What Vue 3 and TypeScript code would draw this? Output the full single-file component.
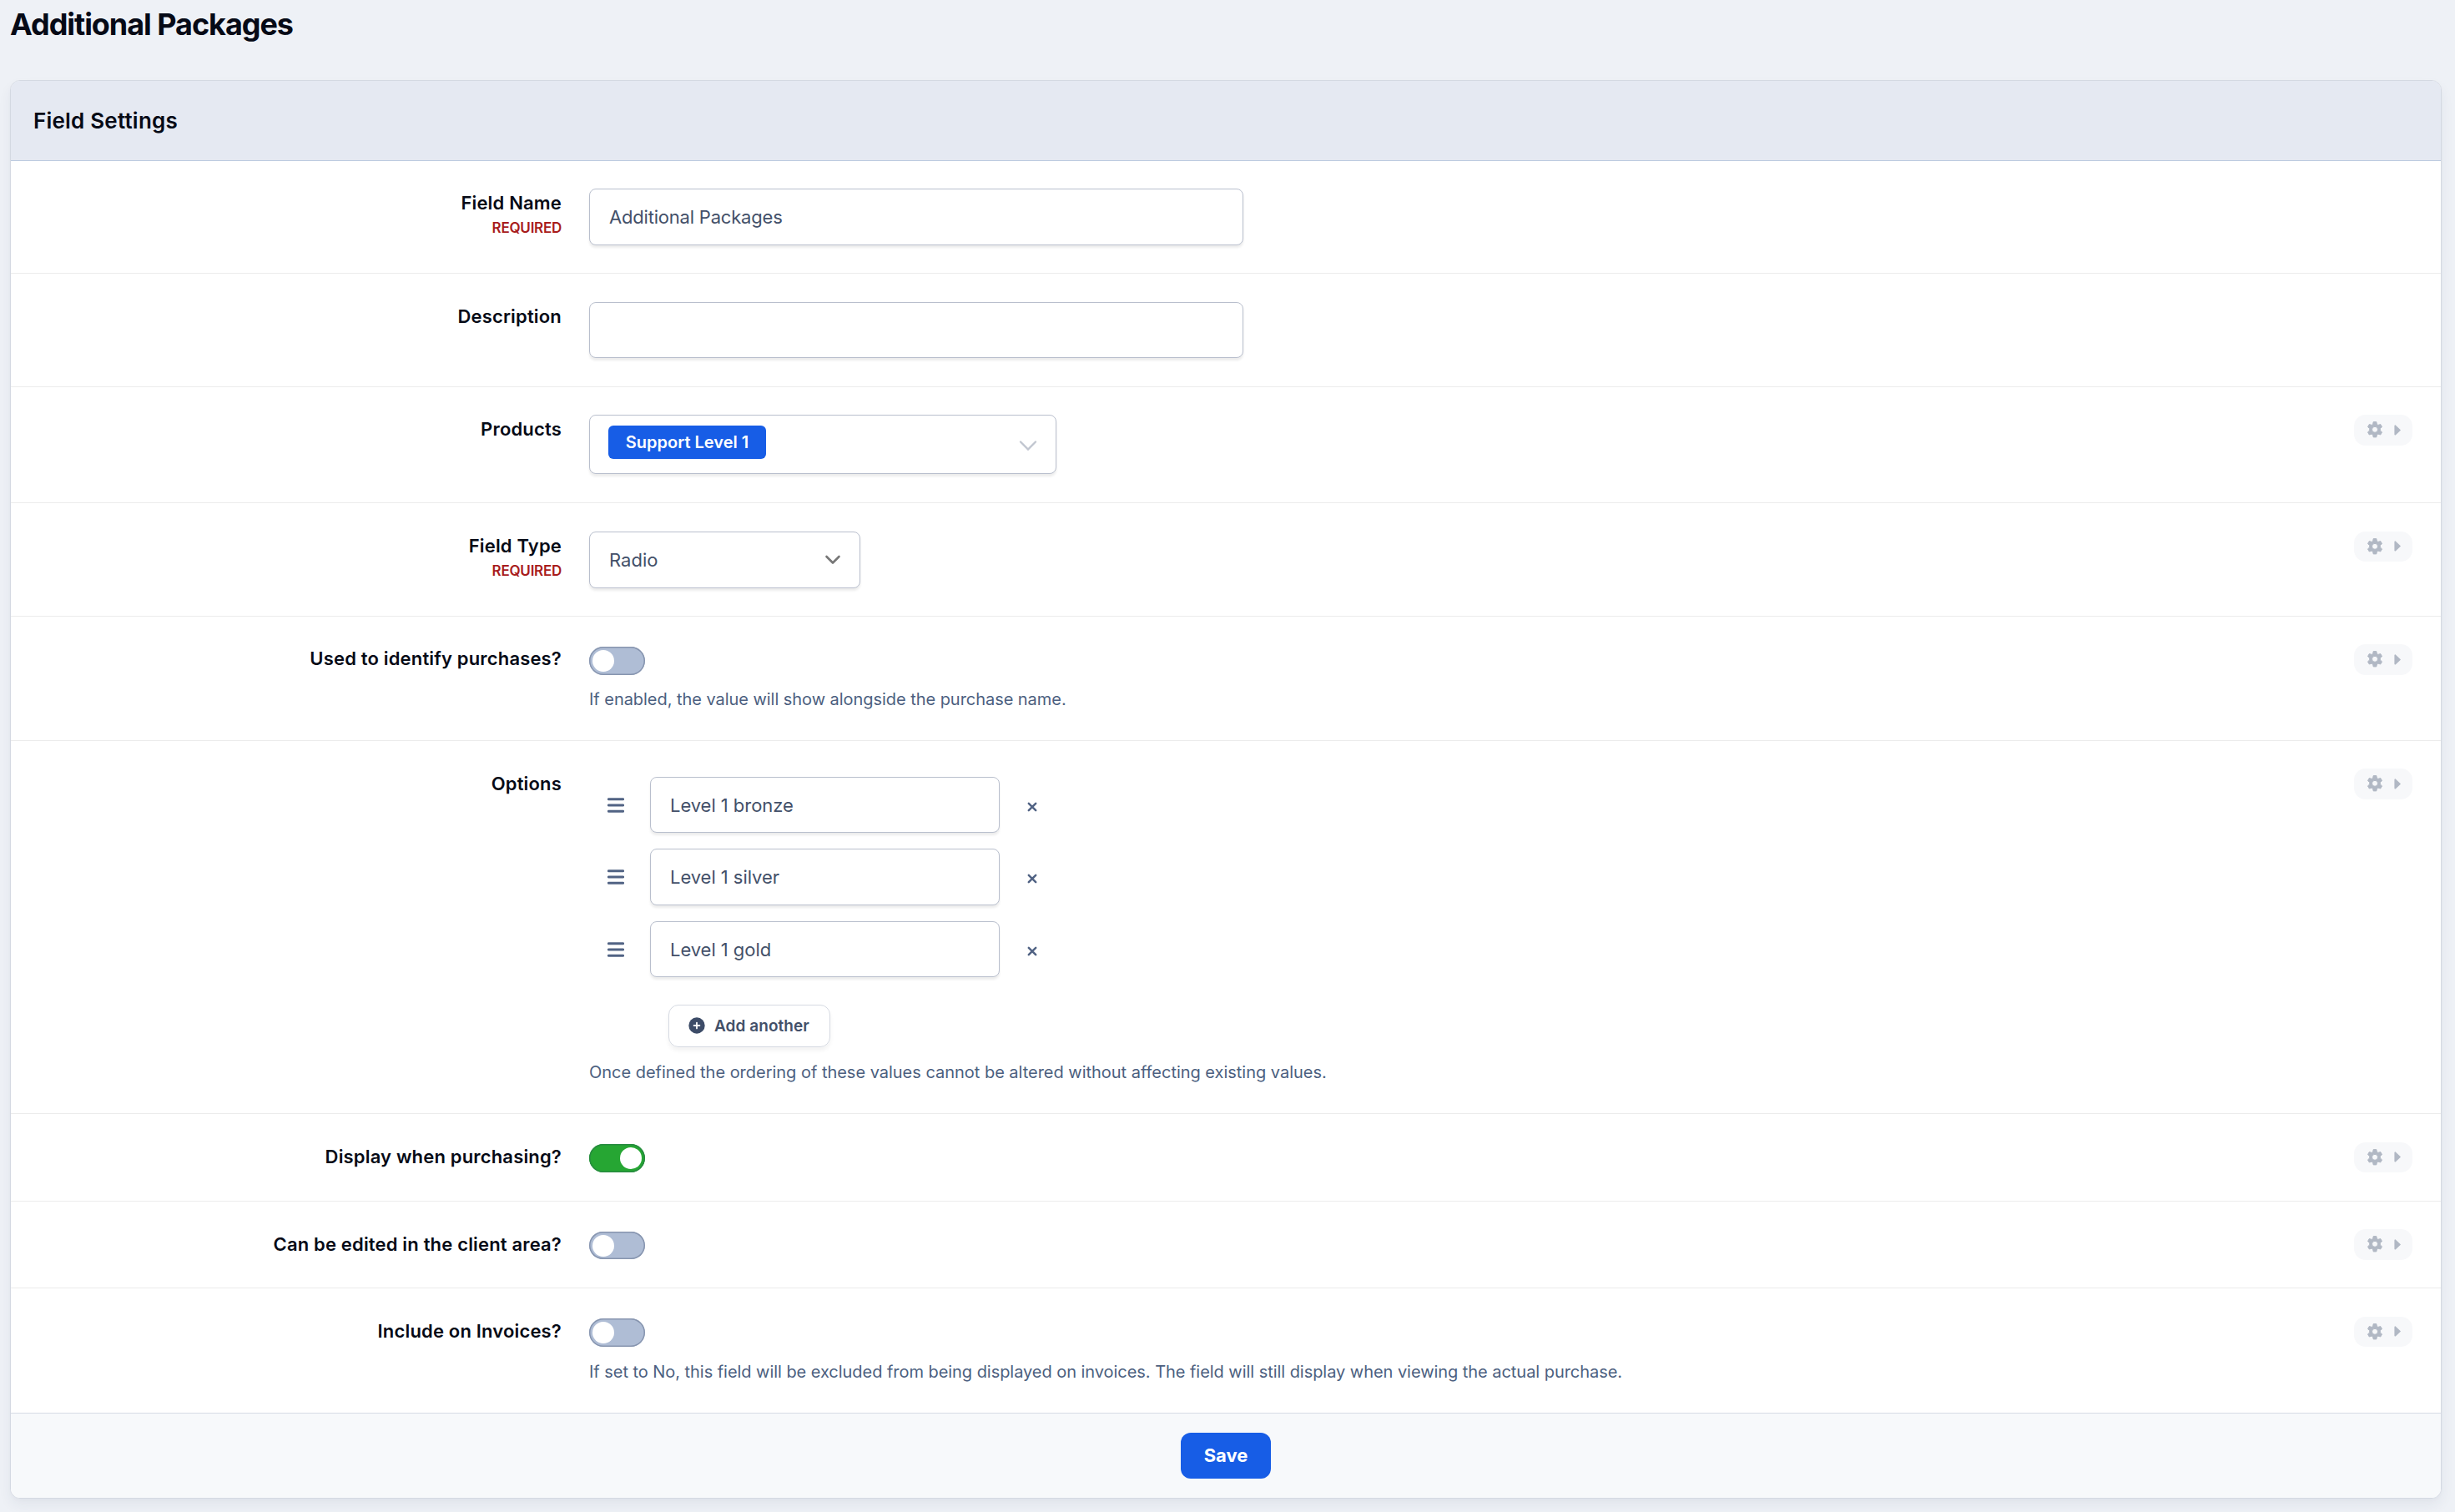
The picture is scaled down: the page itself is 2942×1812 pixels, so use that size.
<script setup lang="ts">
import { ref } from 'vue'

type Kind = 'text' | 'tags' | 'select' | 'toggle' | 'options'

interface Field {
  id: string
  label: string
  kind: Kind
  required?: boolean
  menu?: boolean
  on?: boolean
  value?: string
  help?: string
}

const fields = ref<Field[]>([
  { id: 'name', label: 'Field Name', kind: 'text', required: true, value: 'Additional Packages' },
  { id: 'description', label: 'Description', kind: 'text', value: '' },
  { id: 'products', label: 'Products', kind: 'tags', menu: true, value: 'Support Level 1' },
  { id: 'type', label: 'Field Type', kind: 'select', required: true, menu: true, value: 'Radio' },
  {
    id: 'identify',
    label: 'Used to identify purchases?',
    kind: 'toggle',
    menu: true,
    on: false,
    help: 'If enabled, the value will show alongside the purchase name.',
  },
  {
    id: 'options',
    label: 'Options',
    kind: 'options',
    menu: true,
    help: 'Once defined the ordering of these values cannot be altered without affecting existing values.',
  },
  { id: 'display', label: 'Display when purchasing?', kind: 'toggle', menu: true, on: true },
  { id: 'editable', label: 'Can be edited in the client area?', kind: 'toggle', menu: true, on: false },
  {
    id: 'invoices',
    label: 'Include on Invoices?',
    kind: 'toggle',
    menu: true,
    on: false,
    help: 'If set to No, this field will be excluded from being displayed on invoices. The field will still display when viewing the actual purchase.',
  },
])

const options = ref<string[]>(['Level 1 bronze', 'Level 1 silver', 'Level 1 gold'])
</script>

<template>
  <main class="page">
    <h1 class="title">Additional Packages</h1>

    <section class="panel">
      <header class="panel-head">Field Settings</header>

      <div v-for="f in fields" :key="f.id" class="row" :class="'row-' + f.id">
        <div class="label">
          <div class="label-text">{{ f.label }}</div>
          <div v-if="f.required" class="required">REQUIRED</div>
        </div>

        <div class="control">
          <div v-if="f.kind === 'text'" class="box input">{{ f.value }}</div>

          <div v-else-if="f.kind === 'tags'" class="box tags">
            <span class="tag">{{ f.value }}</span>
            <svg class="chev-light" width="22" height="14" viewBox="0 0 22 14">
              <path d="M2 2.5 L11 11.5 L20 2.5" fill="none" stroke="#c1c6d0" stroke-width="2.4" stroke-linecap="round" />
            </svg>
          </div>

          <div v-else-if="f.kind === 'select'" class="box select">
            <span>{{ f.value }}</span>
            <svg class="chev-dark" width="20" height="14" viewBox="0 0 20 14">
              <path d="M2.5 3 L10 10.5 L17.5 3" fill="none" stroke="#777" stroke-width="2.6" stroke-linecap="round" stroke-linejoin="round" />
            </svg>
          </div>

          <div v-else-if="f.kind === 'toggle'" class="toggle" :class="{ on: f.on }"><i class="knob"></i></div>

          <div v-else class="options">
            <div v-for="o in options" :key="o" class="option">
              <svg class="burger" width="20" height="18" viewBox="0 0 20 18">
                <path d="M1.3 1.8H18.7M1.3 9H18.7M1.3 16.2H18.7" stroke="#516384" stroke-width="2.9" stroke-linecap="round" />
              </svg>
              <div class="box option-input">{{ o }}</div>
              <svg class="remove" width="12" height="12" viewBox="0 0 12 12">
                <path d="M1.8 1.8L10.2 10.2M10.2 1.8L1.8 10.2" stroke="#516384" stroke-width="2.5" stroke-linecap="round" />
              </svg>
            </div>
            <div class="add">
              <svg width="20" height="20" viewBox="0 0 20 20">
                <circle cx="10" cy="10" r="9.7" fill="#3d4c68" />
                <path d="M10 6.6V13.4M6.6 10H13.4" stroke="#fff" stroke-width="1.8" stroke-linecap="round" />
              </svg>
              <span>Add another</span>
            </div>
          </div>

          <div v-if="f.help" class="help">{{ f.help }}</div>
        </div>

        <div v-if="f.menu" class="menu">
          <svg class="gear" width="20" height="20" viewBox="-1 0 20 20">
            <path
              fill="#b1b8c4"
              fill-rule="evenodd"
              d="M7.2.6h3.6l.6 2.9 1.5.9 2.8-.9 1.8 3.1-2.2 2v2.3l2.2 2-1.8 3.1-2.8-.9-1.5.9-.6 2.9H7.2l-.6-2.9-1.5-.9-2.8.9-1.8-3.1 2.2-2V8.6l-2.2-2 1.8-3.1 2.8.9 1.5-.9zM9 6.3a3.5 3.5 0 1 0 0 7 3.5 3.5 0 0 0 0-7z"
              stroke="#b1b8c4"
              stroke-width="1"
              stroke-linejoin="round"
            />
          </svg>
          <svg class="caret" width="8" height="13" viewBox="0 0 8 13">
            <path d="M1.2 1.2V11.8L7 6.5z" fill="#b1b8c4" stroke="#b1b8c4" stroke-width="1.6" stroke-linejoin="round" />
          </svg>
        </div>
      </div>

      <footer class="panel-foot">
        <button class="save" type="button">Save</button>
      </footer>
    </section>
  </main>
</template>

<style>
body {
  background: #eef1f6;
}
</style>

<style scoped>
.page {
  box-sizing: border-box;
  height: 1812px;
  padding: 7px 16px 0 12px;
  overflow: hidden;
  font-family: Inter, 'Liberation Sans', sans-serif;
  background: #eef1f6;
  color: #435069;
}
.page * {
  box-sizing: border-box;
}
.title {
  margin: 0 0 45px;
  font-size: 36px;
  line-height: 44px;
  font-weight: 700;
  letter-spacing: -1.05px;
  color: #060a16;
}
.panel {
  height: 1700px;
  border: 1px solid #d4d9e2;
  border-radius: 12px;
  overflow: hidden;
  background: #fff;
  box-shadow: 0 8px 16px rgba(30, 50, 80, 0.06), 0 2px 4px rgba(30, 50, 80, 0.02);
}
.panel-head {
  height: 96px;
  padding: 32px 0 0 27px;
  border-bottom: 1px solid #bccbe0;
  background: #e5e9f2;
  font-size: 26px;
  line-height: 32px;
  font-weight: 600;
  letter-spacing: 0.2px;
  color: #060a16;
}
.row {
  display: flex;
  align-items: flex-start;
  height: 136px;
  padding-right: 34px;
  border-bottom: 1px solid #ececec;
}
.row-name {
  height: 135px;
}
.row-products {
  height: 139px;
}
.row-identify {
  height: 149px;
}
.row-options {
  height: 447px;
}
.row-display {
  height: 105px;
}
.row-editable {
  height: 104px;
}
.row-invoices {
  height: 149px;
  border-bottom: 0;
}

.label {
  width: 660px;
  padding-top: 38px;
  text-align: right;
  color: #060a16;
}
.row-name .label,
.row-products .label,
.row-identify .label {
  padding-top: 37px;
}
.label-text {
  font-size: 22px;
  line-height: 26px;
  font-weight: 600;
  letter-spacing: 0.17px;
}
.required {
  margin-top: 7px;
  font-size: 17px;
  line-height: 20px;
  font-weight: 600;
  letter-spacing: -0.25px;
  color: #a81c1c;
}
.control {
  flex: 1;
  margin-left: 33px;
  padding-top: 36px;
}
.row-name .control,
.row-products .control {
  padding-top: 33px;
}
.row-description .control,
.row-type .control {
  padding-top: 34px;
}
.row-options .control {
  padding-top: 43px;
}

.box {
  display: flex;
  align-items: center;
  border: 1px solid #b9bfcd;
  border-radius: 8px;
  background: #fff;
  font-size: 22px;
  line-height: 28px;
  box-shadow: 0 3px 3px rgba(0, 0, 0, 0.08);
}
.input {
  width: 784px;
  height: 68px;
  padding-left: 23px;
  letter-spacing: -0.2px;
}
.row-description .input {
  height: 67px;
}
.tags {
  width: 560px;
  height: 71px;
  align-items: flex-start;
  justify-content: space-between;
  padding: 12px 22px 0 22px;
}
.tag {
  width: 189px;
  height: 40px;
  border-radius: 6px;
  background: #175de6;
  color: #fff;
  font-size: 20px;
  line-height: 40px;
  font-weight: 600;
  text-align: center;
}
.chev-light {
  margin-top: 17px;
}
.select {
  width: 325px;
  height: 68px;
  justify-content: space-between;
  padding: 0 22px 1px 23px;
}
.toggle {
  display: flex;
  align-items: center;
  width: 67px;
  height: 34px;
  padding: 0 4px;
  border-radius: 17px;
  background: #afbdd5;
  box-shadow: inset 0 0 0 1.5px #8795af;
}
.row-editable .toggle {
  height: 33px;
}
.toggle.on {
  justify-content: flex-end;
  background: #26a633;
  box-shadow: inset 0 0 0 1.5px #278a40;
}
.knob {
  width: 26px;
  height: 26px;
  border-radius: 50%;
  background: #fff;
}
.help {
  margin-top: 16px;
  font-size: 20px;
  line-height: 26px;
  letter-spacing: -0.045px;
  color: #4c5f80;
}
.row-invoices .help {
  margin-top: 17px;
}
.row-options .help {
  margin-top: 17px;
  letter-spacing: -0.02px;
}

.option {
  display: flex;
  align-items: center;
  height: 67px;
  margin-bottom: 19px;
  padding-left: 22px;
}
.option:nth-child(2) {
  height: 68px;
}
.option-input {
  width: 419px;
  height: 100%;
  margin-left: 31px;
  padding-left: 23px;
  letter-spacing: -0.05px;
}
.remove {
  margin: 4px 0 0 33px;
}
.add {
  display: flex;
  align-items: center;
  width: 194px;
  height: 51px;
  margin: 33px 0 0 95px;
  padding-left: 23px;
  border: 1px solid #d6dae2;
  border-radius: 12px;
  font-size: 19px;
  font-weight: 600;
  letter-spacing: 0.06px;
  color: #435069;
  box-shadow: 0 4px 5px rgba(0, 0, 0, 0.05);
}
.add span {
  margin-left: 11px;
}
.add svg {
  margin-bottom: 1px;
}

.menu {
  display: flex;
  align-items: center;
  width: 70px;
  height: 37px;
  margin-top: 33px;
  padding: 0 14px 1px 15px;
  justify-content: space-between;
  border-radius: 14px;
  background: #f7f8fa;
}
.row-type .menu,
.row-display .menu,
.row-invoices .menu {
  margin-top: 34px;
  height: 36px;
}

.panel-foot {
  display: flex;
  justify-content: center;
  height: 102px;
  padding-top: 23px;
  border-top: 1px solid #d6dbe5;
  background: #f7f9fb;
}
.save {
  width: 108px;
  height: 55px;
  padding: 0;
  border: 0;
  border-radius: 12px;
  background: #175de6;
  color: #fff;
  font: inherit;
  font-size: 22px;
  line-height: 55px;
  font-weight: 700;
}
</style>
